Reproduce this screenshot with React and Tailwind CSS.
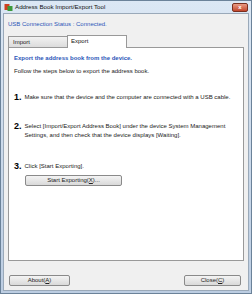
import React from "react";

const font = { fontFamily: '"Liberation Sans", Arial, sans-serif' };

const Step = ({ num, children }) => (
  <div className="flex items-start gap-[3px]">
    <span className="text-[9px] font-bold leading-[9px] text-black">{num}.</span>
    <div className="text-[6px] leading-[9px] text-[#222] whitespace-nowrap">{children}</div>
  </div>
);

const WinButton = ({ children, className }) => (
  <button
    className={`h-[11px] rounded-[2px] border border-[#8a8a8a] bg-gradient-to-b from-[#f4f4f4] to-[#d9d9d9] text-[6px] leading-[9px] text-[#222] ${className}`}
  >
    {children}
  </button>
);

export default function App() {
  return (
    <div
      className="w-[252px] h-[294px] bg-gradient-to-b from-[#dbe7f4] to-[#bccde2] border border-[#6b8299] flex flex-col overflow-hidden"
      style={font}
    >
      {/* title bar */}
      <div className="h-[12px] flex items-center px-[3px] shrink-0">
        <svg width="9" height="9" viewBox="0 0 9 9" className="mr-[2px]">
          <rect x="0.5" y="1" width="5" height="6" fill="#d04020" />
          <rect x="3.5" y="3" width="5" height="5" fill="#3c9a3c" />
        </svg>
        <span className="text-[6.2px] text-[#111] leading-[12px]">
          Address Book Import/Export Tool
        </span>
        <div className="ml-auto w-[16px] h-[9px] rounded-[2px] bg-gradient-to-b from-[#e99a84] to-[#c2452a] border border-[#7a2f1f] flex items-center justify-center">
          <span className="text-white text-[6px] leading-none font-bold">x</span>
        </div>
      </div>

      {/* client area */}
      <div className="flex-1 mx-[2px] mb-[2px] bg-[#f0f0f0] border border-[#9aa9b9] flex flex-col px-[4px]">
        <div className="text-[6px] text-[#2b56b8] leading-[8px] mt-[6px]">
          USB Connection Status : Connected.
        </div>

        {/* tabs */}
        <div className="flex items-end mt-[6px] h-[13px]">
          <div className="w-[60px] h-[11px] border border-[#999] border-b-0 bg-gradient-to-b from-[#f2f2f2] to-[#dcdcdc] text-[6px] leading-[11px] pl-[4px] text-[#222]">
            Import
          </div>
          <div className="w-[60px] h-[13px] border border-[#999] border-b-0 bg-white text-[6px] leading-[11px] pl-[3px] text-[#111] -ml-[1px] relative top-[1px]">
            Export
          </div>
        </div>

        {/* panel */}
        <div className="h-[214px] bg-white border border-[#999] flex flex-col px-[5px] pt-[6px]">
          <div className="text-[6px] font-bold text-[#2b56b8] leading-[8px]">
            Export the address book from the device.
          </div>
          <div className="text-[6px] text-[#222] leading-[8px] mt-[5px]">
            Follow the steps below to export the address book.
          </div>
          <div className="mt-[18px]">
            <Step num="1">
              Make sure that the device and the computer are connected with a USB cable.
            </Step>
          </div>
          <div className="mt-[20px]">
            <Step num="2">
              Select [Import/Export Address Book] under the device System Management
              <br />
              Settings, and then check that the device displays [Waiting].
            </Step>
          </div>
          <div className="mt-[22px]">
            <Step num="3">Click [Start Exporting].</Step>
          </div>
          <WinButton className="w-[97px] ml-[11px] mt-[4px]">
            Start Exporting(<span className="underline">X</span>)...
          </WinButton>
        </div>

        {/* footer buttons */}
        <div className="flex justify-between mt-[14px] px-[1px]">
          <WinButton className="w-[61px]">
            About(<span className="underline">A</span>)
          </WinButton>
          <WinButton className="w-[57px] mr-[2px]">
            Close(<span className="underline">C</span>)
          </WinButton>
        </div>
      </div>
    </div>
  );
}
